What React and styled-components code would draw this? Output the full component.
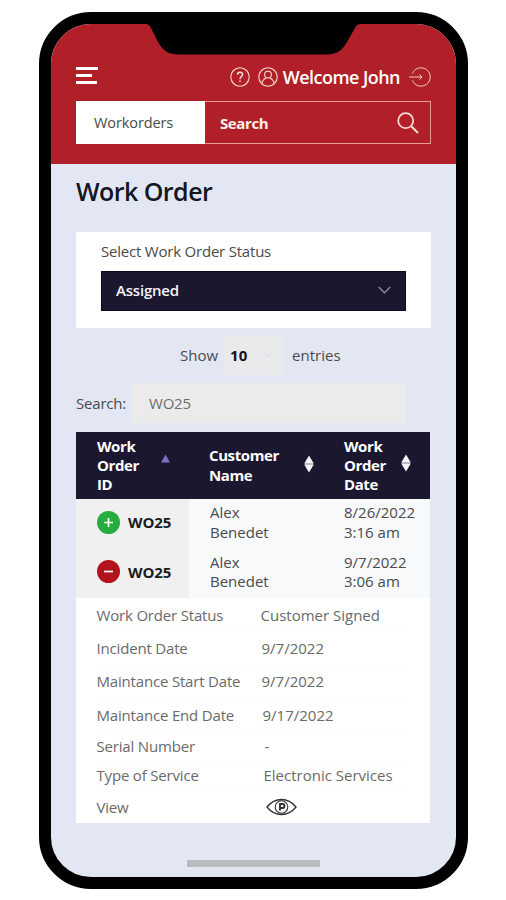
import React from 'react';
import styled, { createGlobalStyle } from 'styled-components';

const GlobalStyle = createGlobalStyle`
  * {
    box-sizing: border-box;
  }
  body {
    margin: 0;
    background: #fff;
    font-family: 'Open Sans', 'Noto Sans', sans-serif;
    font-size: 15px;
    color: #4a4a50;
  }
`;

const Phone = styled.div`
  position: relative;
  width: 429px;
  height: 877px;
  margin: 12px 0 0 39px;
  border: 12px solid #000;
  border-radius: 52px;
  background: #e3e7f4;
  overflow: hidden;
`;

const Notch = styled.svg`
  position: absolute;
  top: -1px;
  left: 93px;
  display: block;
`;

const Header = styled.header`
  height: 140px;
  padding: 42px 25px 0;
  background: #b12028;
`;

const TopBar = styled.div`
  display: flex;
  align-items: center;
  height: 22px;
  color: #fff;
`;

const Burger = styled.div`
  display: flex;
  flex-direction: column;
  gap: 4px;
  margin: -3px auto 0 0;
`;

const BurgerLine = styled.span`
  width: ${(props) => props.$width}px;
  height: 3px;
  background: #fff;
`;

const Welcome = styled.span`
  margin: 0 9px 0 5px;
  font-size: 18px;
  font-weight: 600;
  line-height: 22px;
  letter-spacing: -0.55px;
  white-space: nowrap;
`;

const Icon = styled.svg`
  display: block;
  flex: none;
  fill: none;
  stroke: ${(props) => props.$color || '#fbdcd6'};
  stroke-width: ${(props) => props.$stroke || 1.1};
  margin-left: ${(props) => props.$left || 0}px;
`;

const SearchBar = styled.div`
  display: flex;
  align-items: center;
  height: 43px;
  margin-top: 13px;
  border: 1px solid #e79c98;
`;

const SearchType = styled.div`
  width: 129px;
  height: 43px;
  padding-left: 18px;
  margin-left: -1px;
  background: #fff;
  color: #4a4a4a;
  font-size: 14.5px;
  line-height: 43px;
  letter-spacing: -0.1px;
`;

const SearchText = styled.div`
  flex: 1;
  padding-left: 15px;
  color: #fdeeec;
  font-weight: 700;
  letter-spacing: -0.4px;
`;

const Content = styled.main`
  padding: 0 25px;
`;

const Title = styled.h1`
  margin: 0;
  padding: 12px 0 0;
  height: 68px;
  color: #15151f;
  font-size: 25px;
  font-weight: 600;
  line-height: 30px;
  letter-spacing: -0.55px;
`;

const Panel = styled.section`
  width: 355px;
  height: 96px;
  padding: 10px 25px 0;
  background: #fff;
`;

const Label = styled.div`
  height: 29px;
  line-height: 19px;
  letter-spacing: -0.21px;
`;

const Select = styled.div`
  display: flex;
  align-items: center;
  justify-content: space-between;
  height: 40px;
  padding: 0 14px 2px;
  background: #1b172e;
  border: 1px solid #0b0820;
  color: #f5f5f8;
  font-weight: 600;
  letter-spacing: -0.2px;
`;

const Entries = styled.div`
  display: flex;
  align-items: center;
  height: 40px;
  margin-top: 7px;
  padding-left: 104px;
`;

const EntriesSelect = styled.div`
  display: flex;
  align-items: center;
  width: 60px;
  height: 40px;
  margin: 0 8px 0 6px;
  padding-left: 6px;
  background: #e9eaec;
  color: #111118;
  font-weight: 700;
`;

const Filter = styled.div`
  display: flex;
  align-items: center;
  height: 40px;
  margin-top: 8px;
  letter-spacing: -0.2px;
`;

const FilterInput = styled.div`
  width: 273px;
  height: 40px;
  margin-left: auto;
  margin-right: 26px;
  padding-left: 17px;
  background: #ebebeb;
  color: #6c6c70;
  line-height: 41px;
`;

const TableHead = styled.div`
  display: grid;
  grid-template-columns: 112px 135px 107px;
  align-items: center;
  width: 354px;
  height: 67px;
  margin-top: 9px;
  background: #1b172e;
  color: #fff;
`;

const HeadCell = styled.div`
  display: flex;
  align-items: center;
  justify-content: space-between;
  padding-left: 21px;
  padding-right: ${(props) => props.$right}px;
  font-weight: 700;
  line-height: 19.3px;
  letter-spacing: -0.4px;
`;

const Row = styled.div`
  display: grid;
  grid-template-columns: 113px 134px 107px;
  width: 354px;
  height: 49.5px;
  background: #f7f9fa;
`;

const IdCell = styled.div`
  display: flex;
  align-items: center;
  gap: 8px;
  padding: 0 0 3px 21px;
  background: #f0f0f0;
  color: #1c1c1c;
  font-weight: 700;
  letter-spacing: -0.1px;
`;

const Cell = styled.div`
  padding: 4px 0 0 21px;
  line-height: 19.5px;
  white-space: nowrap;
`;

const Details = styled.dl`
  width: 354px;
  height: 225px;
  margin: 0;
  padding: 0 24px 0 20.5px;
  background: #fff;
  color: #6a6a6a;
`;

const Detail = styled.div`
  display: flex;
  align-items: center;
  height: ${(props) => props.$height}px;
  border-bottom: ${(props) => (props.$last ? 'none' : '1px solid #fbfbfb')};
`;

const Term = styled.dt`
  width: ${(props) => props.$width}px;
  letter-spacing: -0.18px;
`;

const Value = styled.dd`
  margin: 0;
`;

const HomeBar = styled.div`
  width: 133px;
  height: 7px;
  margin: 37px auto 0;
  background: #b8bcbc;
`;

const details = [
  { term: 'Work Order Status', value: 'Customer Signed', width: 164, height: 34 },
  { term: 'Incident Date', value: '9/7/2022', width: 165, height: 33 },
  { term: 'Maintance Start Date', value: '9/7/2022', width: 165, height: 33 },
  { term: 'Maintance End Date', value: '9/17/2022', width: 166, height: 34 },
  { term: 'Serial Number', value: '-', width: 168, height: 29 },
  { term: 'Type of Service', value: 'Electronic Services', width: 167, height: 29 },
  { term: 'View', value: null, width: 169, height: 33 },
];

const rows = [
  { id: 'WO25', open: false, date: '8/26/2022', time: '3:16 am' },
  { id: 'WO25', open: true, date: '9/7/2022', time: '3:06 am' },
];

const SortIcon = () => (
  <Icon width="10" height="18" viewBox="0 0 10 18" style={{ marginTop: -4 }}>
    <path d="M5 0.5L9.5 8H0.5ZM5 17.5L9.5 10H0.5Z" fill="#f4f4f8" stroke="none" />
    <path d="M0.5 9H9.5" stroke="#bdbcc6" strokeWidth="2" />
  </Icon>
);

const ToggleIcon = ({ open }) => (
  <Icon width="23" height="23" viewBox="0 0 23 23" $color="#fff" $stroke={1.7}>
    <circle cx="11.5" cy="11.5" r="11.5" fill={open ? '#b3131b' : '#27ad3f'} stroke="none" />
    <path d={open ? 'M7 11.5H16' : 'M7 11.5H16M11.5 7V16'} />
  </Icon>
);

const EyeIcon = () => (
  <Icon width="31" height="18" viewBox="0 0 31 18" $color="#333" $stroke={1.3}>
    <path d="M1 9C5 4 10 1.5 15.5 1.5S26 4 30 9C26 14 21 16.5 15.5 16.5S5 14 1 9Z" />
    <circle cx="15.5" cy="9" r="6.3" strokeWidth="1.1" />
    <path d="M14 12.500V6H16.500A2 2 0 0 1 16.500 10H14" strokeWidth="1.900" />
  </Icon>
);

const App = () => (
  <>
    <GlobalStyle />
    <Phone>
      <Header>
        <TopBar>
          <Burger>
            <BurgerLine $width={22} />
            <BurgerLine $width={16} />
            <BurgerLine $width={21} />
          </Burger>
          <Icon width="20" height="20" viewBox="0 0 20 20">
            <circle cx="10" cy="10" r="9.2" />
            <path
              d="M7.5 7.8C7.500 6 8.500 5.200 10 5.200S12.600 6.100 12.600 7.500C12.600 9.300 10 9.600 10 12.200M10 13.600V15"
              strokeWidth="1.4"
            />
          </Icon>
          <Icon width="20" height="20" viewBox="0 0 20 20" $left={8}>
            <circle cx="10" cy="10" r="9.2" />
            <circle cx="10" cy="7.6" r="3.4" />
            <path d="M4 16.5C4.500 13 6.500 11.700 8 11.200M16 16.500C15.500 13 13.500 11.700 12 11.200" />
          </Icon>
          <Welcome>Welcome John</Welcome>
          <Icon width="22" height="20" viewBox="0 0 22 20" $stroke={0.9}>
            <path d="M3.5 6.5A9.200 9.200 0 1 1 3.500 13.500" />
            <path d="M0 10H13M10.5 7.5L13 10L10.5 12.5" />
          </Icon>
        </TopBar>
        <SearchBar>
          <SearchType>Workorders</SearchType>
          <SearchText>Search</SearchText>
          <Icon width="22" height="22" viewBox="0 0 22 22" $stroke={1.7} style={{ marginRight: 11 }}>
            <circle cx="8.7" cy="8.7" r="7.5" />
            <path d="M14 14L21 21" strokeWidth="2" />
          </Icon>
        </SearchBar>
      </Header>
      <Notch width="218" height="32" viewBox="0 0 218 32">
        <path
          d="M0 0H218V1C213 1 213 2 211 5L203 19C198 28 192 31.500 183 31.500H35C25 31.500 19 28 14 19L7 5C5 2 5 1 0 1Z"
          fill="#000"
        />
      </Notch>
      <Content>
        <Title>Work Order</Title>
        <Panel>
          <Label>Select Work Order Status</Label>
          <Select>
            Assigned
            <Icon width="13" height="8" viewBox="0 0 13 8" $color="#8a88a8" $stroke={1.3}>
              <path d="M0.7 1L6.5 6.8L12.3 1" />
            </Icon>
          </Select>
        </Panel>
        <Entries>
          Show
          <EntriesSelect>
            10
            <Icon width="10" height="6" viewBox="0 0 10 6" $color="#e0e2e6" $left={16}>
              <path d="M1 1L5 5L9 1" />
            </Icon>
          </EntriesSelect>
          entries
        </Entries>
        <Filter>
          Search:
          <FilterInput>WO25</FilterInput>
        </Filter>
        <TableHead>
          <HeadCell $right={18}>
            <span>
              Work
              <br />
              Order
              <br />
              ID
            </span>
            <Icon width="9" height="9" viewBox="0 0 9 9" style={{ marginTop: -13 }}>
              <path d="M4.5 0.5L9 8.5H0Z" fill="#7673bf" stroke="none" />
            </Icon>
          </HeadCell>
          <HeadCell $right={9}>
            <span>
              Customer
              <br />
              Name
            </span>
            <SortIcon />
          </HeadCell>
          <HeadCell $right={19}>
            <span>
              Work
              <br />
              Order
              <br />
              Date
            </span>
            <SortIcon />
          </HeadCell>
        </TableHead>
        {rows.map((row) => (
          <Row key={row.date}>
            <IdCell>
              <ToggleIcon open={row.open} />
              {row.id}
            </IdCell>
            <Cell>
              Alex
              <br />
              Benedet
            </Cell>
            <Cell>
              {row.date}
              <br />
              {row.time}
            </Cell>
          </Row>
        ))}
        <Details>
          {details.map(({ term, value, width, height }) => (
            <Detail key={term} $height={height} $last={!value}>
              <Term $width={width}>{term}</Term>
              <Value>{value || <EyeIcon />}</Value>
            </Detail>
          ))}
        </Details>
        <HomeBar />
      </Content>
    </Phone>
  </>
);

export default App;
